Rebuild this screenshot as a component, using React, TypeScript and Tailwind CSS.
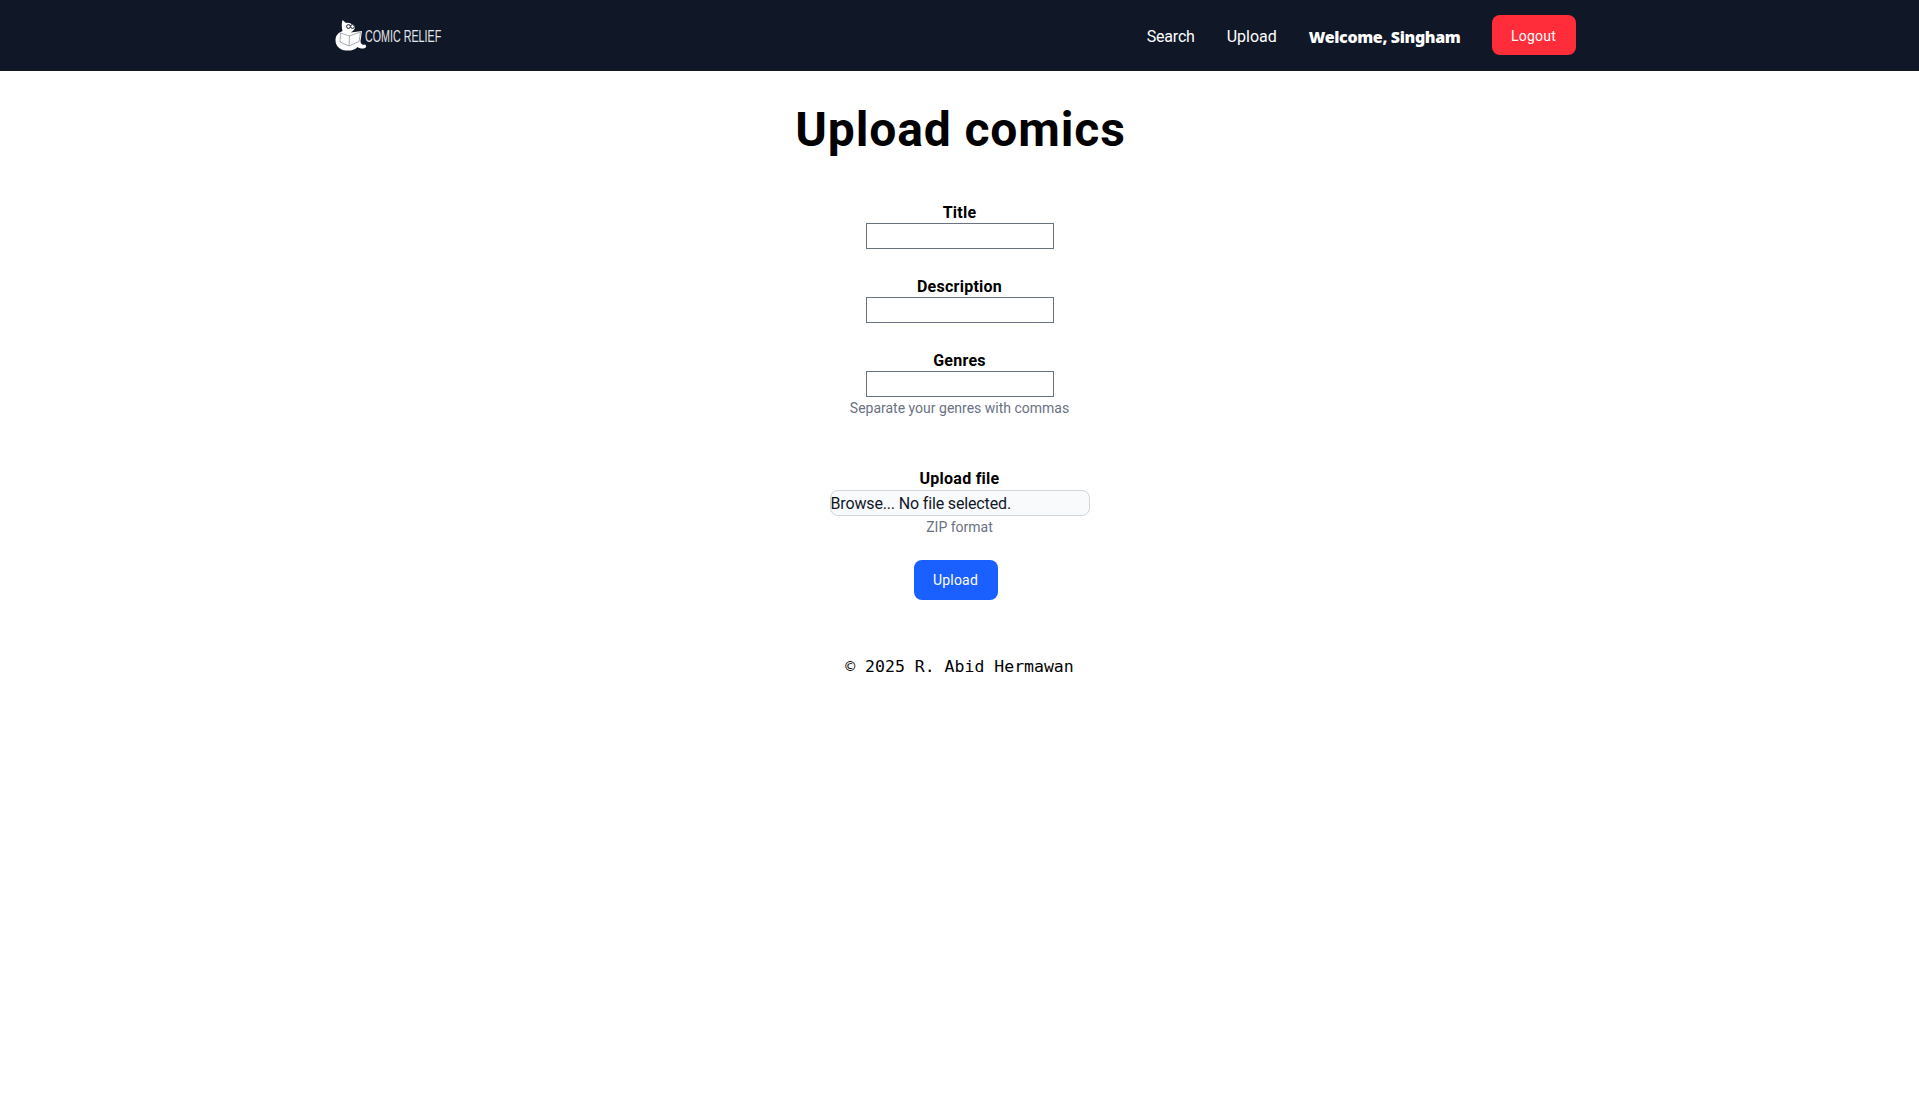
import React from 'react';

const sans = { fontFamily: 'Roboto, "Noto Sans", sans-serif' };

// Cat with glasses reading a book
const CatLogo: React.FC = () => (
  <svg viewBox="0 0 32 32" className="w-[32px] h-[32px] shrink-0">
    <path
      fill="#fff"
      d="M7.5 0 L11 3 C13 2.5 15 3 16.5 4 C18.5 4.5 20 5.5 20 7.5 C19.5 10 17.5 11.5 15.5 12.5 L27 11 L25.5 21 C25.5 24 27.5 25.5 30 24.5 C31.5 25.5 31.5 27 30 28 C27.5 29 24.5 28.5 22.5 27 C19.5 30 15.5 31 11 30.5 C4.5 30 0.5 26 0.5 20 C0.5 15.5 3.5 12.5 7.5 11 C6.5 7.5 6.5 3.5 7.5 0 Z"
    />
    <circle cx="13.5" cy="6.5" r="1.9" fill="#fff" stroke="#111827" strokeWidth="1" />
    <circle cx="17.5" cy="6.5" r="1.9" fill="#fff" stroke="#111827" strokeWidth="1" />
    <path
      fill="none"
      stroke="#6b7280"
      strokeWidth="0.6"
      d="M5.5 13 L14.5 16 L25.5 12 L24 21.5 L14 26 L5 22 Z M14.5 16 L14 26"
    />
  </svg>
);

const Field: React.FC<{ label: string; hint?: string }> = ({ label, hint }) => (
  <div className="flex flex-col items-center">
    <label className="pt-[1px] text-base font-bold leading-[21px] tracking-[0.25px] text-black">{label}</label>
    <input type="text" className="ml-[1px] w-[188px] h-[26px] border border-gray-500 bg-white" />
    {hint && <p className="mt-[1px] text-sm leading-[20px] text-gray-500">{hint}</p>}
  </div>
);

export default function App() {
  return (
    <div className="min-h-[1112px] bg-white" style={sans}>
      <nav className="bg-gray-900 h-[71px]">
        <div className="max-w-[1280px] h-full mx-auto pl-[15px] pr-[24px] flex items-center justify-between">
          <a className="flex items-center w-[110px]">
            <CatLogo />
            <span
              className="-ml-[2px] pt-[2px] text-[16px] whitespace-nowrap text-gray-200 origin-left scale-x-[0.67]"
              style={{ fontFamily: '"Liberation Sans", sans-serif' }}
            >
              COMIC RELIEF
            </span>
          </a>
          <div className="flex items-center gap-[32px] text-base text-white">
            <a className="pt-[2px] tracking-[-0.2px]">Search</a>
            <a className="pt-[2px]">Upload</a>
            <span
              className="pt-[2px] font-black tracking-[-0.35px]"
              style={{ fontFamily: '"Noto Sans", sans-serif' }}
            >
              Welcome, Singham
            </span>
            <button className="-ml-[1px] -mt-[1px] pt-[1px] w-[84px] h-[40px] rounded-lg bg-[#ff2d3a] text-sm tracking-[0.2px] text-white">
              Logout
            </button>
          </div>
        </div>
      </nav>

      <main className="flex flex-col items-center">
        <h1 className="mt-[31px] ml-[2px] text-[48px] leading-[56px] font-bold tracking-[0.018em] text-black">
          Upload comics
        </h1>

        <form className="mt-[43px] flex flex-col items-center">
          <div className="flex flex-col items-center gap-[26px]">
            <Field label="Title" />
            <Field label="Description" />
            <Field label="Genres" hint="Separate your genres with commas" />
          </div>

          <div className="mt-[50px] flex flex-col items-center">
            <label className="text-base font-bold leading-[22px] tracking-[0.25px] text-black">Upload file</label>
            <div className="w-[260px] h-[26px] rounded-lg border border-gray-300 bg-gray-50 text-base leading-[26px] tracking-[-0.15px] text-gray-900">
              Browse... No file selected.
            </div>
            <p className="mt-[1px] text-sm leading-[20px] text-gray-500">ZIP format</p>
          </div>

          <button
            type="button"
            className="mt-[23px] -ml-[8px] w-[84px] h-[40px] rounded-lg bg-[#1a5fff] text-sm tracking-[0.2px] text-white"
          >
            Upload
          </button>
        </form>

        <footer
          className="mt-[55px] text-[16.5px] leading-[24px] text-black"
          style={{ fontFamily: '"DejaVu Sans Mono", monospace' }}
        >
          © 2025 R. Abid Hermawan
        </footer>
      </main>
    </div>
  );
}
